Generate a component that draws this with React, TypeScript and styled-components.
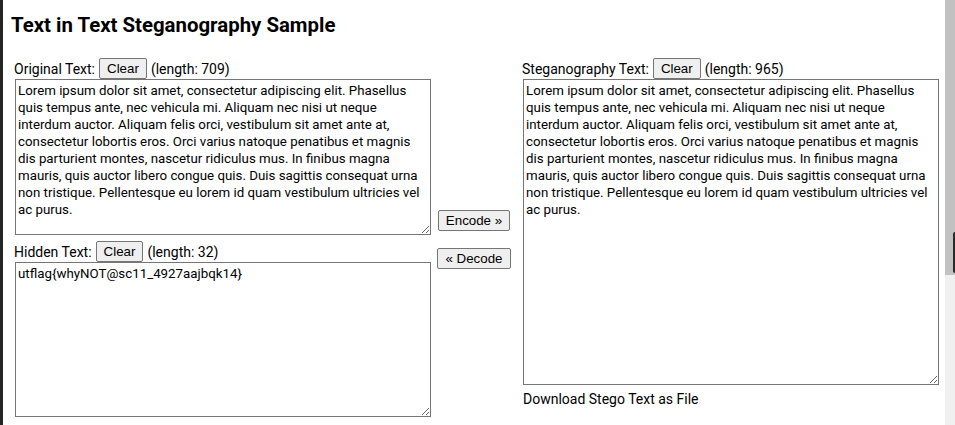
import React, { useState } from "react";
import styled, { createGlobalStyle } from "styled-components";

const Global = createGlobalStyle`
  html, body { margin: 0; padding: 0; background: #fff; overflow: hidden; }
  body { font-family: Roboto, "Noto Sans", sans-serif; color: #000; }
`;

const Page = styled.div`
  height: 425px;
  box-sizing: border-box;
  border-left: 3px solid #242424;
  padding: 11px 0 0 12px;
`;

const Title = styled.h1`
  margin: 0 0 19px -4px;
  font-family: Roboto, sans-serif;
  font-size: 20.4px;
  font-weight: 700;
  line-height: 28px;
`;

const Layout = styled.div`
  display: flex;
  align-items: stretch;
`;

const Column = styled.div`
  width: 416px;
  display: flex;
  flex-direction: column;
`;

const Middle = styled.div`
  width: 92px;
  box-sizing: border-box;
  display: flex;
  flex-direction: column;
  align-items: center;
  justify-content: center;
  gap: 17px;
  padding: 3px 6px 0 0;
`;

const LabelRow = styled.div<{ $top?: number }>`
  display: flex;
  align-items: center;
  height: 21px;
  margin-top: ${(p) => p.$top ?? 0}px;
  margin-left: -1px;
  font-size: 14px;
  gap: 4px;
`;

const Button = styled.button`
  font-family: "Liberation Sans", Arial, sans-serif;
  font-size: 13.33px;
  height: 21px;
  padding: 0 7px;
  background: #efefef;
  border: 1px solid #767676;
  border-radius: 2px;
  color: #000;
  line-height: 19px;
`;

const MidButton = styled(Button)<{ $w: number }>`
  width: ${(p) => p.$w}px;
  padding: 0;
`;

const Area = styled.textarea<{ $h: number }>`
  box-sizing: border-box;
  width: 100%;
  height: ${(p) => p.$h}px;
  margin: 0;
  font-family: Roboto, sans-serif;
  font-size: 13.3px;
  line-height: 17px;
  padding: 2px 2px;
  border: 1px solid #767676;
  border-radius: 0;
  resize: both;
  color: #000;
  outline: none;
  overflow: hidden;
`;

const Download = styled.div`
  font-size: 14px;
  margin-top: 6px;
`;

const ScrollTrack = styled.div`
  position: fixed;
  top: 0;
  right: 0;
  width: 10px;
  height: 425px;
  background: #f0f0f0;
`;

const ScrollThumb = styled.div`
  width: 100%;
  height: 275px;
  background: #c1c1c1;
  position: relative;
`;

const EdgeTab = styled.div`
  position: absolute;
  right: 0;
  top: 232px;
  width: 2px;
  height: 41px;
  background: #2a2a2a;
  border-radius: 2px 0 0 2px;
`;

const LOREM =
  "Lorem ipsum dolor sit amet, consectetur adipiscing elit. Phasellus quis tempus ante, nec vehicula mi. Aliquam nec nisi ut neque interdum auctor. Aliquam felis orci, vestibulum sit amet ante at, consectetur lobortis eros. Orci varius natoque penatibus et magnis dis parturient montes, nascetur ridiculus mus. In finibus magna mauris, quis auctor libero congue quis. Duis sagittis consequat urna non tristique. Pellentesque eu lorem id quam vestibulum ultricies vel ac purus.";

export default function App() {
  const [orig, setOrig] = useState(LOREM);
  const [hidden, setHidden] = useState("utflag{whyNOT@sc11_4927aajbqk14}");
  const [stego, setStego] = useState(LOREM);
  return (
    <>
      <Global />
      <Page>
        <Title>Text in Text Steganography Sample</Title>
        <Layout>
          <Column>
            <LabelRow>
              Original Text: <Button onClick={() => setOrig("")}>Clear</Button> (length: 709)
            </LabelRow>
            <Area $h={156} value={orig} onChange={(e) => setOrig(e.target.value)} />
            <LabelRow $top={6}>
              Hidden Text: <Button onClick={() => setHidden("")}>Clear</Button> (length: 32)
            </LabelRow>
            <Area $h={155} value={hidden} onChange={(e) => setHidden(e.target.value)} />
          </Column>
          <Middle>
            <MidButton $w={72}>Encode »</MidButton>
            <MidButton $w={74}>« Decode</MidButton>
          </Middle>
          <Column>
            <LabelRow>
              Steganography Text: <Button onClick={() => setStego("")}>Clear</Button> (length: 965)
            </LabelRow>
            <Area $h={306} value={stego} onChange={(e) => setStego(e.target.value)} />
            <Download>Download Stego Text as File</Download>
          </Column>
        </Layout>
      </Page>
      <ScrollTrack>
        <ScrollThumb>
          <EdgeTab />
        </ScrollThumb>
      </ScrollTrack>
    </>
  );
}
